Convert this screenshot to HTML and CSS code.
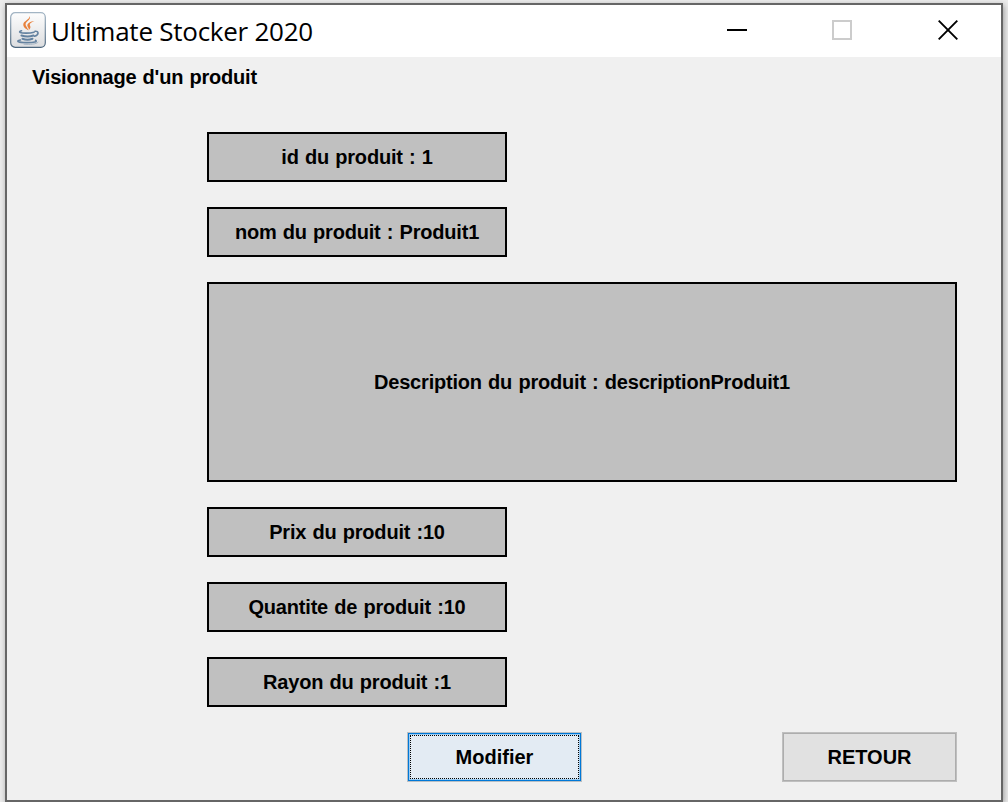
FILE: index.html
```html
<!DOCTYPE html>
<html lang="fr">
<head>
<meta charset="utf-8">
<title>Ultimate Stocker 2020</title>
<link rel="stylesheet" href="styles.css">
</head>
<body>
<div class="window">
  <header class="titlebar">
    <svg class="app-icon" width="36" height="36" viewBox="0 0 36 36">
      <defs>
        <linearGradient id="tile" x1="0" y1="0" x2="0" y2="1">
          <stop offset="0" stop-color="#fdfdfd"/><stop offset="1" stop-color="#dcdddf"/>
        </linearGradient>
        <linearGradient id="edge" x1="0" y1="0" x2="0" y2="1">
          <stop offset="0" stop-color="#a3b5c4"/><stop offset="1" stop-color="#4c667d"/>
        </linearGradient>
      </defs>
      <rect x=".7" y=".7" width="34.6" height="34.6" rx="4.5" fill="url(#tile)" stroke="url(#edge)" stroke-width="1.2"/>
      <path d="M19.500 4c2.300 4-5 5.700-3.800 9.200.5 1.500 2 2.800 2.800 5.300-3-1.800-5.500-3.500-5.200-6.200.3-3.500 6.400-4.500 6.200-8.300z" fill="#e8813c"/>
      <path d="M24.500 9c-3.300 1.200-5.300 2.500-4.600 4.200.8 1.500 1 3-1.200 5 .5-1.800-.7-2.500-1.200-3.900-1-3 3-5 7-5.300z" fill="#e8813c"/>
      <g fill="none" stroke="#6482a0" stroke-linecap="round">
        <path d="M11.500 18.800c-4 1.200-1 2.400 5 2.300 3 0 5.500-.4 7.500-.9" stroke-width="1.700"/>
        <path d="M11.500 23.500c3.500 1.200 8.500 1.200 12 .1" stroke-width="2.100"/>
        <path d="M12.500 26.700c3 1.200 7 1.100 10 0" stroke-width="2"/>
        <path d="M25 19.300c4.200-.5 4 3.700-.5 5" stroke-width="1.600"/>
        <path d="M10.500 28c-5.500 1.200-2 2.700 6.500 2.600 7 0 11-.8 8.500-2.300" stroke-width="1.600"/>
        <path d="M14 32.200c6 .5 12 .1 14-1.900" stroke-width="1" stroke="#a5b5c4"/>
      </g>
    </svg>
    <h1 class="title">Ultimate Stocker 2020</h1>
    <div class="controls">
      <svg width="20" height="20" viewBox="0 0 20 20"><path d="M0 10h20" stroke="#000" stroke-width="2"/></svg>
      <svg width="20" height="20" viewBox="0 0 20 20"><rect x="1" y="1" width="18" height="18" fill="none" stroke="#ccc" stroke-width="2"/></svg>
      <svg class="close" width="20" height="20" viewBox="0 0 20 20"><path d="M.7.700 19.300 19.300M19.300.7.700 19.300" stroke="#000" stroke-width="1.900"/></svg>
    </div>
  </header>
  <main class="content">
    <h2 class="heading">Visionnage d'un produit</h2>
    <div class="fields">
      <div class="field">id du produit : 1</div>
      <div class="field">nom du produit : Produit1</div>
      <div class="field description">Description du produit : descriptionProduit1</div>
      <div class="field">Prix du produit :10</div>
      <div class="field">Quantite de produit :10</div>
      <div class="field">Rayon du produit :1</div>
    </div>
    <div class="actions">
      <button class="button focused"><span class="face">Modifier</span></button>
      <button class="button"><span class="face">RETOUR</span></button>
    </div>
  </main>
</div>
</body>
</html>
```
FILE: styles.css
```css
* { box-sizing: border-box; }
body {
  margin: 0;
  padding: 3px 5px 0;
  height: 802px;
  overflow: hidden;
  background: #ececec;
  font: bold 20px/24px "Liberation Sans", Arial, sans-serif;
  color: #000;
}
.window {
  width: 998px;
  height: 799px;
  border: 2px solid #666;
  background: #f0f0f0;
  box-shadow: 1px 2px 6px rgba(0, 0, 0, .35);
}
.titlebar {
  display: flex;
  align-items: center;
  height: 52px;
  padding: 0 43px 2px 3px;
  background: #fff;
}
.title {
  margin: 2px 0 0 5px;
  font: 400 26px/36px "Open Sans", sans-serif;
  letter-spacing: -.25px;
}
.controls { display: flex; gap: 85px; margin-left: auto; }
.controls svg { display: block; }
.controls .close { margin-left: 1px; }
.content { padding: 8px 44px 0 25px; }
.heading {
  margin: 0;
  font-size: 20px;
  line-height: 24px;
  letter-spacing: -.2px;
  word-spacing: .9px;
}
.fields {
  display: grid;
  gap: 25px;
  margin: 43px 0 0 175px;
}
.field {
  display: flex;
  align-items: center;
  justify-content: center;
  width: 300px;
  height: 50px;
  border: 2px solid #000;
  background: #c0c0c0;
  letter-spacing: -.2px;
  word-spacing: .9px;
  white-space: nowrap;
}
.description { width: 750px; height: 200px; }
.actions {
  display: flex;
  justify-content: space-between;
  margin: 25px 0 0 375px;
}
.button {
  width: 175px;
  height: 50px;
  padding: 0;
  border: 1px solid #bfbfbf;
  background: #e1e1e1;
  box-shadow: inset 0 0 0 1px #adadad;
  color: #000;
  font: inherit;
}
.face { display: flex; align-items: center; justify-content: center; height: 100%; }
.focused {
  padding: 2px;
  border-color: #b9bfc4;
  background: #e3ebf3;
  box-shadow: inset 0 0 0 1px #0078d7, inset 0 0 0 2px #9fcdf2;
}
.focused .face { border: 1px dotted #000; }
```
